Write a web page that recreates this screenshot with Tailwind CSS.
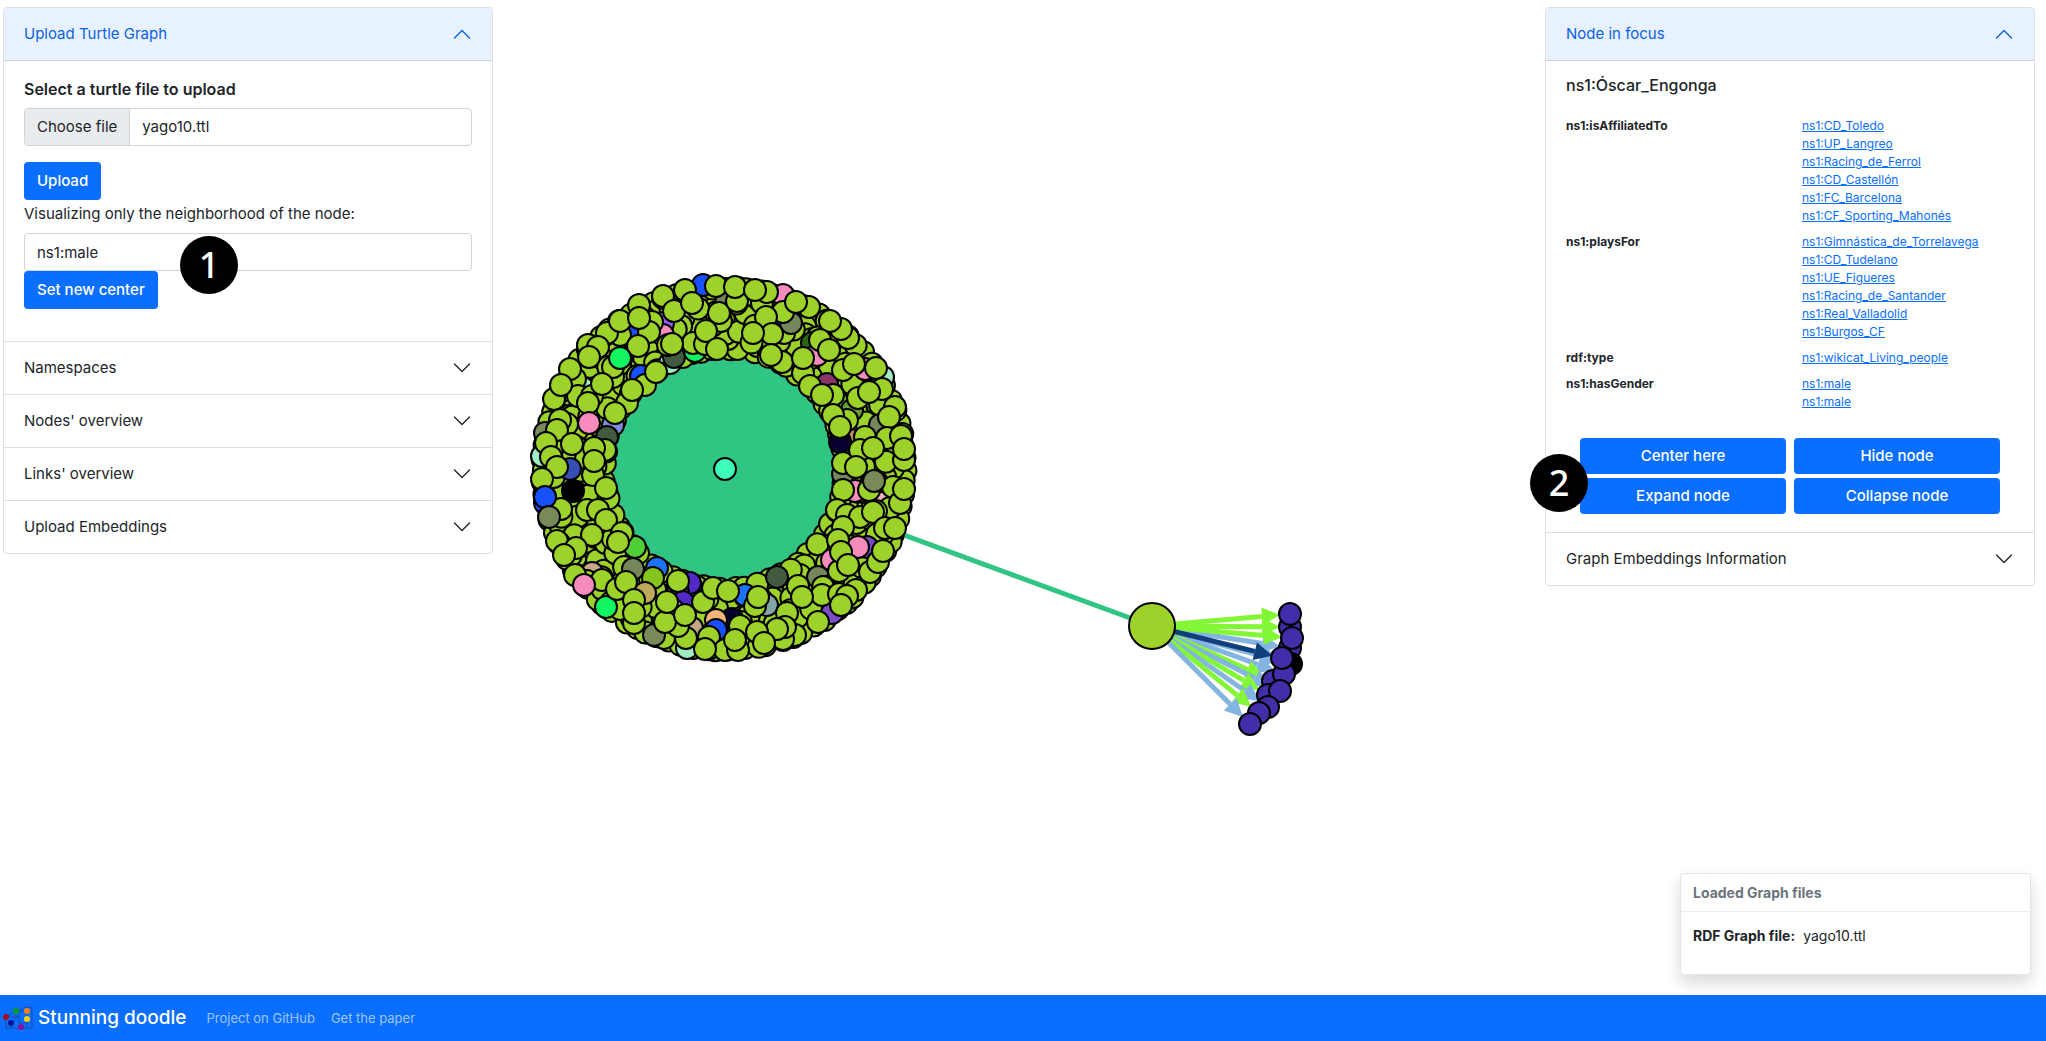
<!DOCTYPE html>
<html lang="en">
<head>
<meta charset="utf-8">
<meta name="viewport" content="width=device-width, initial-scale=1">
<title>Stunning doodle</title>
<script src="https://cdn.jsdelivr.net/npm/@tailwindcss/browser@4"></script>
</head>
<body class="flex min-h-screen flex-col bg-white font-['Inter','Liberation_Sans',sans-serif] text-[15px] leading-[22px] text-[#212529]">
<main class="relative flex flex-1 items-start justify-between pt-[7px] pr-[11px] pl-[3px]">
  <svg id="graph" class="absolute inset-0 h-full w-full" role="img" aria-label="Graph around ns1:male"></svg>

  <section class="relative w-[490px] rounded border border-[#dfdfdf] bg-white">
    <h2><button type="button" aria-expanded="true" class="flex h-[53px] w-full items-center justify-between rounded-t border-b border-[#c4d3e6] bg-[#e7f1ff] px-5 text-[#0c63e4]">Upload Turtle Graph
      <svg class="h-5 w-5" viewBox="0 0 20 20" fill="none" stroke="currentColor" stroke-width="1.4" stroke-linecap="round" stroke-linejoin="round"><path d="M2.5 14 10 6.500 17.500 14"/></svg></button></h2>
    <form class="flex flex-col items-start px-5 pt-[17px] pb-8">
      <label for="file" class="mb-2 text-[16px] font-semibold">Select a turtle file to upload</label>
      <label for="file" class="mb-4 flex h-[38px] w-full overflow-hidden rounded border border-[#ced4da]">
        <span class="flex items-center border-r border-[#ced4da] bg-[#e9ecef] px-3">Choose file</span>
        <span class="flex items-center px-3">yago10.ttl</span>
      </label>
      <input id="file" type="file" class="sr-only">
      <button type="button" class="h-[38px] rounded bg-[#0a6eff] px-[13px] font-medium text-white">Upload</button>
      <label for="center" class="mt-[3px] mb-2">Visualizing only the neighborhood of the node:</label>
      <input id="center" type="text" value="ns1:male" class="h-[38px] w-full rounded border border-[#ced4da] px-3">
      <button type="button" class="h-[38px] rounded bg-[#0a6eff] px-[13px] font-medium text-white">Set new center</button>
    </form>
    <button type="button" class="flex h-[53px] w-full items-center justify-between border-t border-[#dfdfdf] px-5">Namespaces
      <svg class="h-5 w-5" viewBox="0 0 20 20" fill="none" stroke="currentColor" stroke-width="1.4" stroke-linecap="round" stroke-linejoin="round"><path d="M2.500 6 10 13.500 17.500 6"/></svg></button>
    <button type="button" class="flex h-[53px] w-full items-center justify-between border-t border-[#dfdfdf] px-5">Nodes' overview
      <svg class="h-5 w-5" viewBox="0 0 20 20" fill="none" stroke="currentColor" stroke-width="1.4" stroke-linecap="round" stroke-linejoin="round"><path d="M2.500 6 10 13.500 17.500 6"/></svg></button>
    <button type="button" class="flex h-[53px] w-full items-center justify-between border-t border-[#dfdfdf] px-5">Links' overview
      <svg class="h-5 w-5" viewBox="0 0 20 20" fill="none" stroke="currentColor" stroke-width="1.4" stroke-linecap="round" stroke-linejoin="round"><path d="M2.500 6 10 13.500 17.500 6"/></svg></button>
    <button type="button" class="flex h-[53px] w-full items-center justify-between border-t border-[#dfdfdf] px-5">Upload Embeddings
      <svg class="h-5 w-5" viewBox="0 0 20 20" fill="none" stroke="currentColor" stroke-width="1.4" stroke-linecap="round" stroke-linejoin="round"><path d="M2.500 6 10 13.500 17.500 6"/></svg></button>
    <span class="absolute top-[228px] left-[176px] flex h-[58px] w-[58px] items-center justify-center rounded-full bg-black font-['Noto_Sans',sans-serif] text-[36px] font-medium text-white">1</span>
  </section>

  <section class="relative w-[490px] rounded border border-[#dfdfdf] bg-white">
    <h2><button type="button" aria-expanded="true" class="flex h-[53px] w-full items-center justify-between rounded-t border-b border-[#c4d3e6] bg-[#e7f1ff] px-5 text-[#0c63e4]">Node in focus
      <svg class="h-5 w-5" viewBox="0 0 20 20" fill="none" stroke="currentColor" stroke-width="1.4" stroke-linecap="round" stroke-linejoin="round"><path d="M2.500 14 10 6.500 17.500 14"/></svg></button></h2>
    <div class="px-5 pt-[13px] pb-[18px]">
      <h3 class="mb-[21px] text-[16px] font-medium">ns1:Óscar_Engonga</h3>
      <dl class="grid grid-cols-[236px_1fr] gap-y-2 text-[12px] leading-[18px]">
        <dt class="font-bold">ns1:isAffiliatedTo</dt>
        <dd class="flex flex-col items-start text-[#0a6eff] underline"><a href="#">ns1:CD_Toledo</a><a href="#">ns1:UP_Langreo</a><a href="#">ns1:Racing_de_Ferrol</a><a href="#">ns1:CD_Castellón</a><a href="#">ns1:FC_Barcelona</a><a href="#">ns1:CF_Sporting_Mahonés</a></dd>
        <dt class="font-bold">ns1:playsFor</dt>
        <dd class="flex flex-col items-start text-[#0a6eff] underline"><a href="#">ns1:Gimnástica_de_Torrelavega</a><a href="#">ns1:CD_Tudelano</a><a href="#">ns1:UE_Figueres</a><a href="#">ns1:Racing_de_Santander</a><a href="#">ns1:Real_Valladolid</a><a href="#">ns1:Burgos_CF</a></dd>
        <dt class="font-bold">rdf:type</dt>
        <dd class="flex flex-col items-start text-[#0a6eff] underline"><a href="#">ns1:wikicat_Living_people</a></dd>
        <dt class="font-bold">ns1:hasGender</dt>
        <dd class="flex flex-col items-start text-[#0a6eff] underline"><a href="#">ns1:male</a><a href="#">ns1:male</a></dd>
      </dl>
      <div class="mt-[27px] grid grid-cols-2 gap-x-2 gap-y-1 px-3.5">
        <button type="button" class="h-9 rounded bg-[#0a6eff] font-medium text-white">Center here</button>
        <button type="button" class="h-9 rounded bg-[#0a6eff] font-medium text-white">Hide node</button>
        <button type="button" class="h-9 rounded bg-[#0a6eff] font-medium text-white">Expand node</button>
        <button type="button" class="h-9 rounded bg-[#0a6eff] font-medium text-white">Collapse node</button>
      </div>
    </div>
    <button type="button" class="flex h-[53px] w-full items-center justify-between border-t border-[#dfdfdf] px-5">Graph Embeddings Information
      <svg class="h-5 w-5" viewBox="0 0 20 20" fill="none" stroke="currentColor" stroke-width="1.4" stroke-linecap="round" stroke-linejoin="round"><path d="M2.500 6 10 13.500 17.500 6"/></svg></button>
    <span class="absolute top-[446px] -left-4 flex h-[58px] w-[58px] items-center justify-center rounded-full bg-black font-['Noto_Sans',sans-serif] text-[36px] font-medium text-white">2</span>
  </section>

  <aside class="absolute right-[15px] bottom-5 w-[351px] rounded border border-[#e5e5e5] bg-white text-[14px] leading-5 shadow-[0_8px_16px_rgba(0,0,0,0.15)]">
    <h2 class="border-b border-[#ededed] px-3 pt-[9px] pb-2 font-bold text-[#6c757d]">Loaded Graph files</h2>
    <p class="px-3 pt-3.5 pb-7"><strong class="mr-2 font-bold">RDF Graph file:</strong>yago10.ttl</p>
  </aside>
</main>

<footer class="flex h-[46px] items-center bg-[#0a6eff] pl-[3px]">
  <svg class="mr-[5px] h-6 w-[30px]" viewBox="0 0 30 24" fill="none"><path d="M3 11V22H29V2L22 .8 19 3 13 5 3 11ZM13 5V12L8 17V22M24 5H16V17H24V13M24 5V22M3 11H16" stroke="#1a458a" stroke-width=".8"/><circle cx="13" cy="5" r="3" fill="#0a9a28"/><circle cx="24" cy="5" r="3" fill="#f98015"/><circle cx="3" cy="11" r="3" fill="#a10d1f"/><circle cx="24" cy="13" r="3" fill="#f6cf13"/><circle cx="8" cy="17" r="3" fill="#0b129e"/><circle cx="18" cy="21" r="3" fill="#8a10a0"/></svg>
  <a href="#" class="mr-5 text-[19px] font-medium text-white">Stunning doodle</a>
  <nav class="flex gap-4 text-[13px] text-white/60"><a href="#">Project on GitHub</a><a href="#">Get the paper</a></nav>
</footer>

<script>
const svg = document.getElementById('graph');
const NS = 'http://www.w3.org/2000/svg';
const LIME = '#9dd22a';
function add(tag, attrs) {
  const el = document.createElementNS(NS, tag);
  for (const k in attrs) el.setAttribute(k, attrs[k]);
  svg.appendChild(el);
}
function node(x, y, fill = LIME, r = 11) {
  add('circle', { cx: x, cy: y, r, fill, stroke: '#000', 'stroke-width': 2 });
}
function arrow(x1, y1, x2, y2, color) {
  const d = Math.hypot(x2 - x1, y2 - y1), ux = (x2 - x1) / d, uy = (y2 - y1) / d;
  const tx = x2 - ux * 10, ty = y2 - uy * 10, bx = tx - ux * 18, by = ty - uy * 18;
  add('line', { x1, y1, x2: bx, y2: by, stroke: color, 'stroke-width': 5 });
  add('polygon', { points: [tx, ty, bx - uy * 9, by + ux * 9, bx + uy * 9, by - ux * 9].join(' '), fill: color });
}

// links of the centre node
add('circle', { cx: 724, cy: 469, r: 122, fill: '#30c583' });
add('line', { x1: 724, y1: 469, x2: 1152, y2: 626, stroke: '#30c583', 'stroke-width': 5 });

// neighbours packed in a ring, outer and inner rows interleaved
let seed = 7;
const rnd = () => (seed = (seed * 16807) % 2147483647) / 2147483647;
const ring = [];
for (let row = 0; row < 8; row++) {
  const r = 120 + row * 8.7, n = Math.round(2 * Math.PI * r / 12.5);
  for (let i = 0; i < n; i++) {
    const a = (i + rnd() * 0.7 + row * 0.4) / n * 2 * Math.PI, d = r + (row > 0 && row < 7 ? (rnd() - 0.5) * 7 : rnd() * 2 - 1);
    ring.push([724 + Math.cos(a) * d, 469 + Math.sin(a) * d, rnd()]);
  }
}
ring.sort((p, q) => p[2] - q[2]).forEach(p => node(p[0], p[1]));

// coloured neighbours that others overlap
[[703,285,'#1751fb'],[726,303,'#73875a'],[663,323,'#9a5cf7'],[663,335,'#f58cbd'],[637,335,'#1751fb'],[670,363,'#9decc2'],[674,357,'#425b3f'],[695,351,'#12f562'],[641,376,'#1751fb'],[613,425,'#7b8ddd'],[607,437,'#425b3f'],[542,456,'#9decc2'],[545,433,'#788a57'],[583,388,'#9decc2'],[570,469,'#364fb5'],
[783,295,'#f58cbd'],[777,322,'#5329c8'],[791,323,'#73875a'],[812,343,'#28660f'],[817,355,'#f58cbd'],[827,384,'#863566'],[865,369,'#f58cbd'],[883,377,'#9decc2'],[838,403,'#49d82c'],[852,410,'#64a038'],[880,425,'#73875a'],[851,440,'#c0895a'],[840,442,'#05002d'],
[545,503,'#1751fb'],[545,497,'#1751fb'],[635,547,'#4fcf35'],[633,569,'#73875a'],[657,568,'#1b73f7'],[653,578,'#86c51c'],[592,573,'#c5a886'],[690,583,'#5329c8'],[678,592,'#425b3f'],[683,602,'#5329c8'],[673,610,'#eba1b7'],[645,593,'#bfa95b'],[692,628,'#c5a886'],[732,619,'#05002d'],[716,620,'#f2b577'],[716,630,'#1751fb'],[687,648,'#9decc2'],
[843,474,'#73875a'],[855,491,'#f58cbd'],[882,503,'#f5b1ba'],[867,547,'#7749c5'],[858,547,'#f58cbd'],[832,560,'#f58cbd'],[818,577,'#73875a'],[830,586,'#05002d'],[745,595,'#1b73f7'],[767,605,'#81a7a5'],[832,613,'#7d4cc7']
].forEach(n => node(...n));

// plain neighbours covering part of the coloured ones
[[693,343],[705,344],[575,379],[578,396],[592,396],[668,345],[783,312],[833,395],[847,420],[869,490],[890,508],[876,511],[843,463],[839,571],[823,587],[822,595],[839,594],[587,581],[602,580],[675,620],[740,626],[755,606]].forEach(n => node(...n));

// neighbours lying on top
[[645,385],[627,403],[615,413],[685,290],[716,286],[663,296],[674,311],[692,303],[639,305],[652,322],[649,332],[620,335],[607,333],[620,321],[639,318],[588,345],[598,347],[589,357],[570,369],[554,399],[561,385],[638,346],[672,344],[656,372],[613,377],[613,367],[602,384],[632,390],[588,403],[719,313],[706,331],[717,349],[560,420],[557,430],[546,443],[572,444],[605,450],[594,448],[594,461],[551,457],[620,358,'#12f562'],[589,423,'#f58cbd'],
[737,301],[762,303],[767,292],[735,287],[755,290],[809,307],[796,302],[848,338],[841,329],[830,321],[766,317],[772,334],[753,333],[782,362],[771,355],[820,340],[829,350],[803,373],[803,358],[810,386],[822,395],[843,370],[876,368],[854,364],[858,398],[882,389],[869,392],[895,407],[889,417],[833,415],[840,427],[865,437],[887,438],[901,436],[860,450],[873,448],[904,460],[904,449],
[557,467],[561,509],[542,479],[606,488],[587,510],[598,510],[606,520],[622,533],[618,542],[592,535],[545,497,'#1751fb'],[573,491,'#000'],[549,517,'#788a57'],[557,541],[576,548],[564,555],[575,575],[584,585,'#f58cbd'],[606,607,'#12f562'],[617,589],[626,582],[634,600],[634,623],[634,613],[664,638],[654,635,'#788a57'],[686,638],[678,626],[665,622],[685,615],[667,602],[678,581],[703,602],[713,588],[709,637],[725,650],[705,649],
[856,467],[893,487],[874,481,'#788a57'],[900,503],[904,489],[843,490],[837,510],[847,515],[860,517],[873,512],[843,527],[885,528],[895,528],[838,540],[841,552],[848,565],[870,572],[878,562],[883,551],[856,590],[847,596],[841,605],[777,577,'#425b3f'],[798,586],[802,597],[758,597],[728,591],[787,613],[795,635],[783,639],[785,627],[777,629],[818,622],[757,632],[764,643],[738,650],[735,640]
].forEach(n => node(...n));
node(725, 469, '#3effb9');

// expanded player node and its own links
const G = '#83f736', B = '#83b5e0';
[[1290,648,B],[1291,664,B],[1284,674,B],[1273,681,G],[1280,691,B],[1268,695,G],[1268,707,B],[1259,713,G],[1250,724,B],[1292,638,G],[1290,627,G],[1290,614,G],[1282,658,'#0f3f7d']].forEach(([x, y, c]) => arrow(1152, 626, x, y, c));
[[1290,627],[1290,648],[1291,664,'#000'],[1290,614],[1292,638],[1273,681],[1284,674],[1282,658],[1268,695],[1280,691],[1268,707],[1259,713],[1250,724]].forEach(([x, y, c]) => node(x, y, c || '#432da8'));
node(1152, 626, LIME, 23);
</script>
</body>
</html>
